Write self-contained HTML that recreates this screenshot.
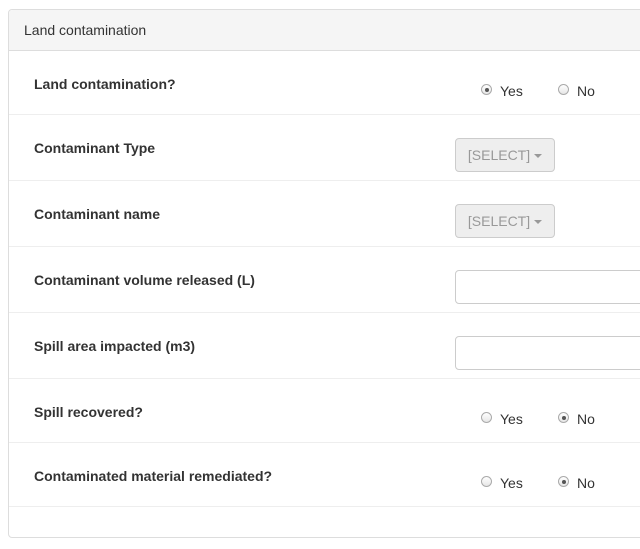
<!DOCTYPE html>
<html><head><style>
body{margin:0;background:#fff;font-family:"Liberation Sans",sans-serif;font-size:14px;color:#333;width:640px;height:549px;overflow:hidden;position:relative}
.panel{position:absolute;left:8px;top:9px;width:700px;height:527px;border:1px solid #ddd;border-radius:4px;background:#fff}
.hd{height:40px;background:#f5f5f5;border-bottom:1px solid #ddd;line-height:40px;padding-left:15px;border-radius:4px 4px 0 0}
.row{position:absolute;left:0;width:700px;border-bottom:1px solid #eee}
.lbl{position:absolute;left:25px;font-weight:bold;font-size:14px}
.sel{position:absolute;left:446px;width:98px;height:32px;border:1px solid #ccc;border-radius:4px;background:#eee;color:#999;line-height:32px;text-align:center;font-size:14px}
.car{display:inline-block;width:0;height:0;border-left:4px solid transparent;border-right:4px solid transparent;border-top:4px solid #999;vertical-align:middle;margin-left:4px}
.inp{position:absolute;left:446px;width:300px;height:32px;border:1px solid #ccc;border-radius:4px}
.r{position:absolute;width:11px;height:11px;border:1px solid #aaa;border-radius:50%;background:linear-gradient(#fff,#e6e6e6);box-sizing:border-box}
.r.on::after{content:"";position:absolute;left:2.5px;top:2.5px;width:4px;height:4px;border-radius:50%;background:#555}
.t{position:absolute;font-size:14px}
</style></head><body>
<div class="panel">
<div class="hd">Land contamination</div>
<div class="row" style="top:41px;height:63px"></div>
<div class="row" style="top:105px;height:65px"></div>
<div class="row" style="top:171px;height:65px"></div>
<div class="row" style="top:237px;height:65px"></div>
<div class="row" style="top:303px;height:65px"></div>
<div class="row" style="top:369px;height:63px"></div>
<div class="row" style="top:433px;height:63px"></div>

<div class="lbl" style="top:66px">Land contamination?</div>
<div class="r on" style="left:472px;top:74px"></div><div class="t" style="left:491px;top:73px">Yes</div>
<div class="r" style="left:549px;top:74px"></div><div class="t" style="left:568px;top:73px">No</div>

<div class="lbl" style="top:130px">Contaminant Type</div>
<div class="sel" style="top:128px">[SELECT]<span class="car"></span></div>

<div class="lbl" style="top:196px">Contaminant name</div>
<div class="sel" style="top:194px">[SELECT]<span class="car"></span></div>

<div class="lbl" style="top:262px">Contaminant volume released (L)</div>
<div class="inp" style="top:260px"></div>

<div class="lbl" style="top:328px">Spill area impacted (m3)</div>
<div class="inp" style="top:326px"></div>

<div class="lbl" style="top:394px">Spill recovered?</div>
<div class="r" style="left:472px;top:402px"></div><div class="t" style="left:491px;top:401px">Yes</div>
<div class="r on" style="left:549px;top:402px"></div><div class="t" style="left:568px;top:401px">No</div>

<div class="lbl" style="top:458px">Contaminated material remediated?</div>
<div class="r" style="left:472px;top:466px"></div><div class="t" style="left:491px;top:465px">Yes</div>
<div class="r on" style="left:549px;top:466px"></div><div class="t" style="left:568px;top:465px">No</div>
</div>
</body></html>
